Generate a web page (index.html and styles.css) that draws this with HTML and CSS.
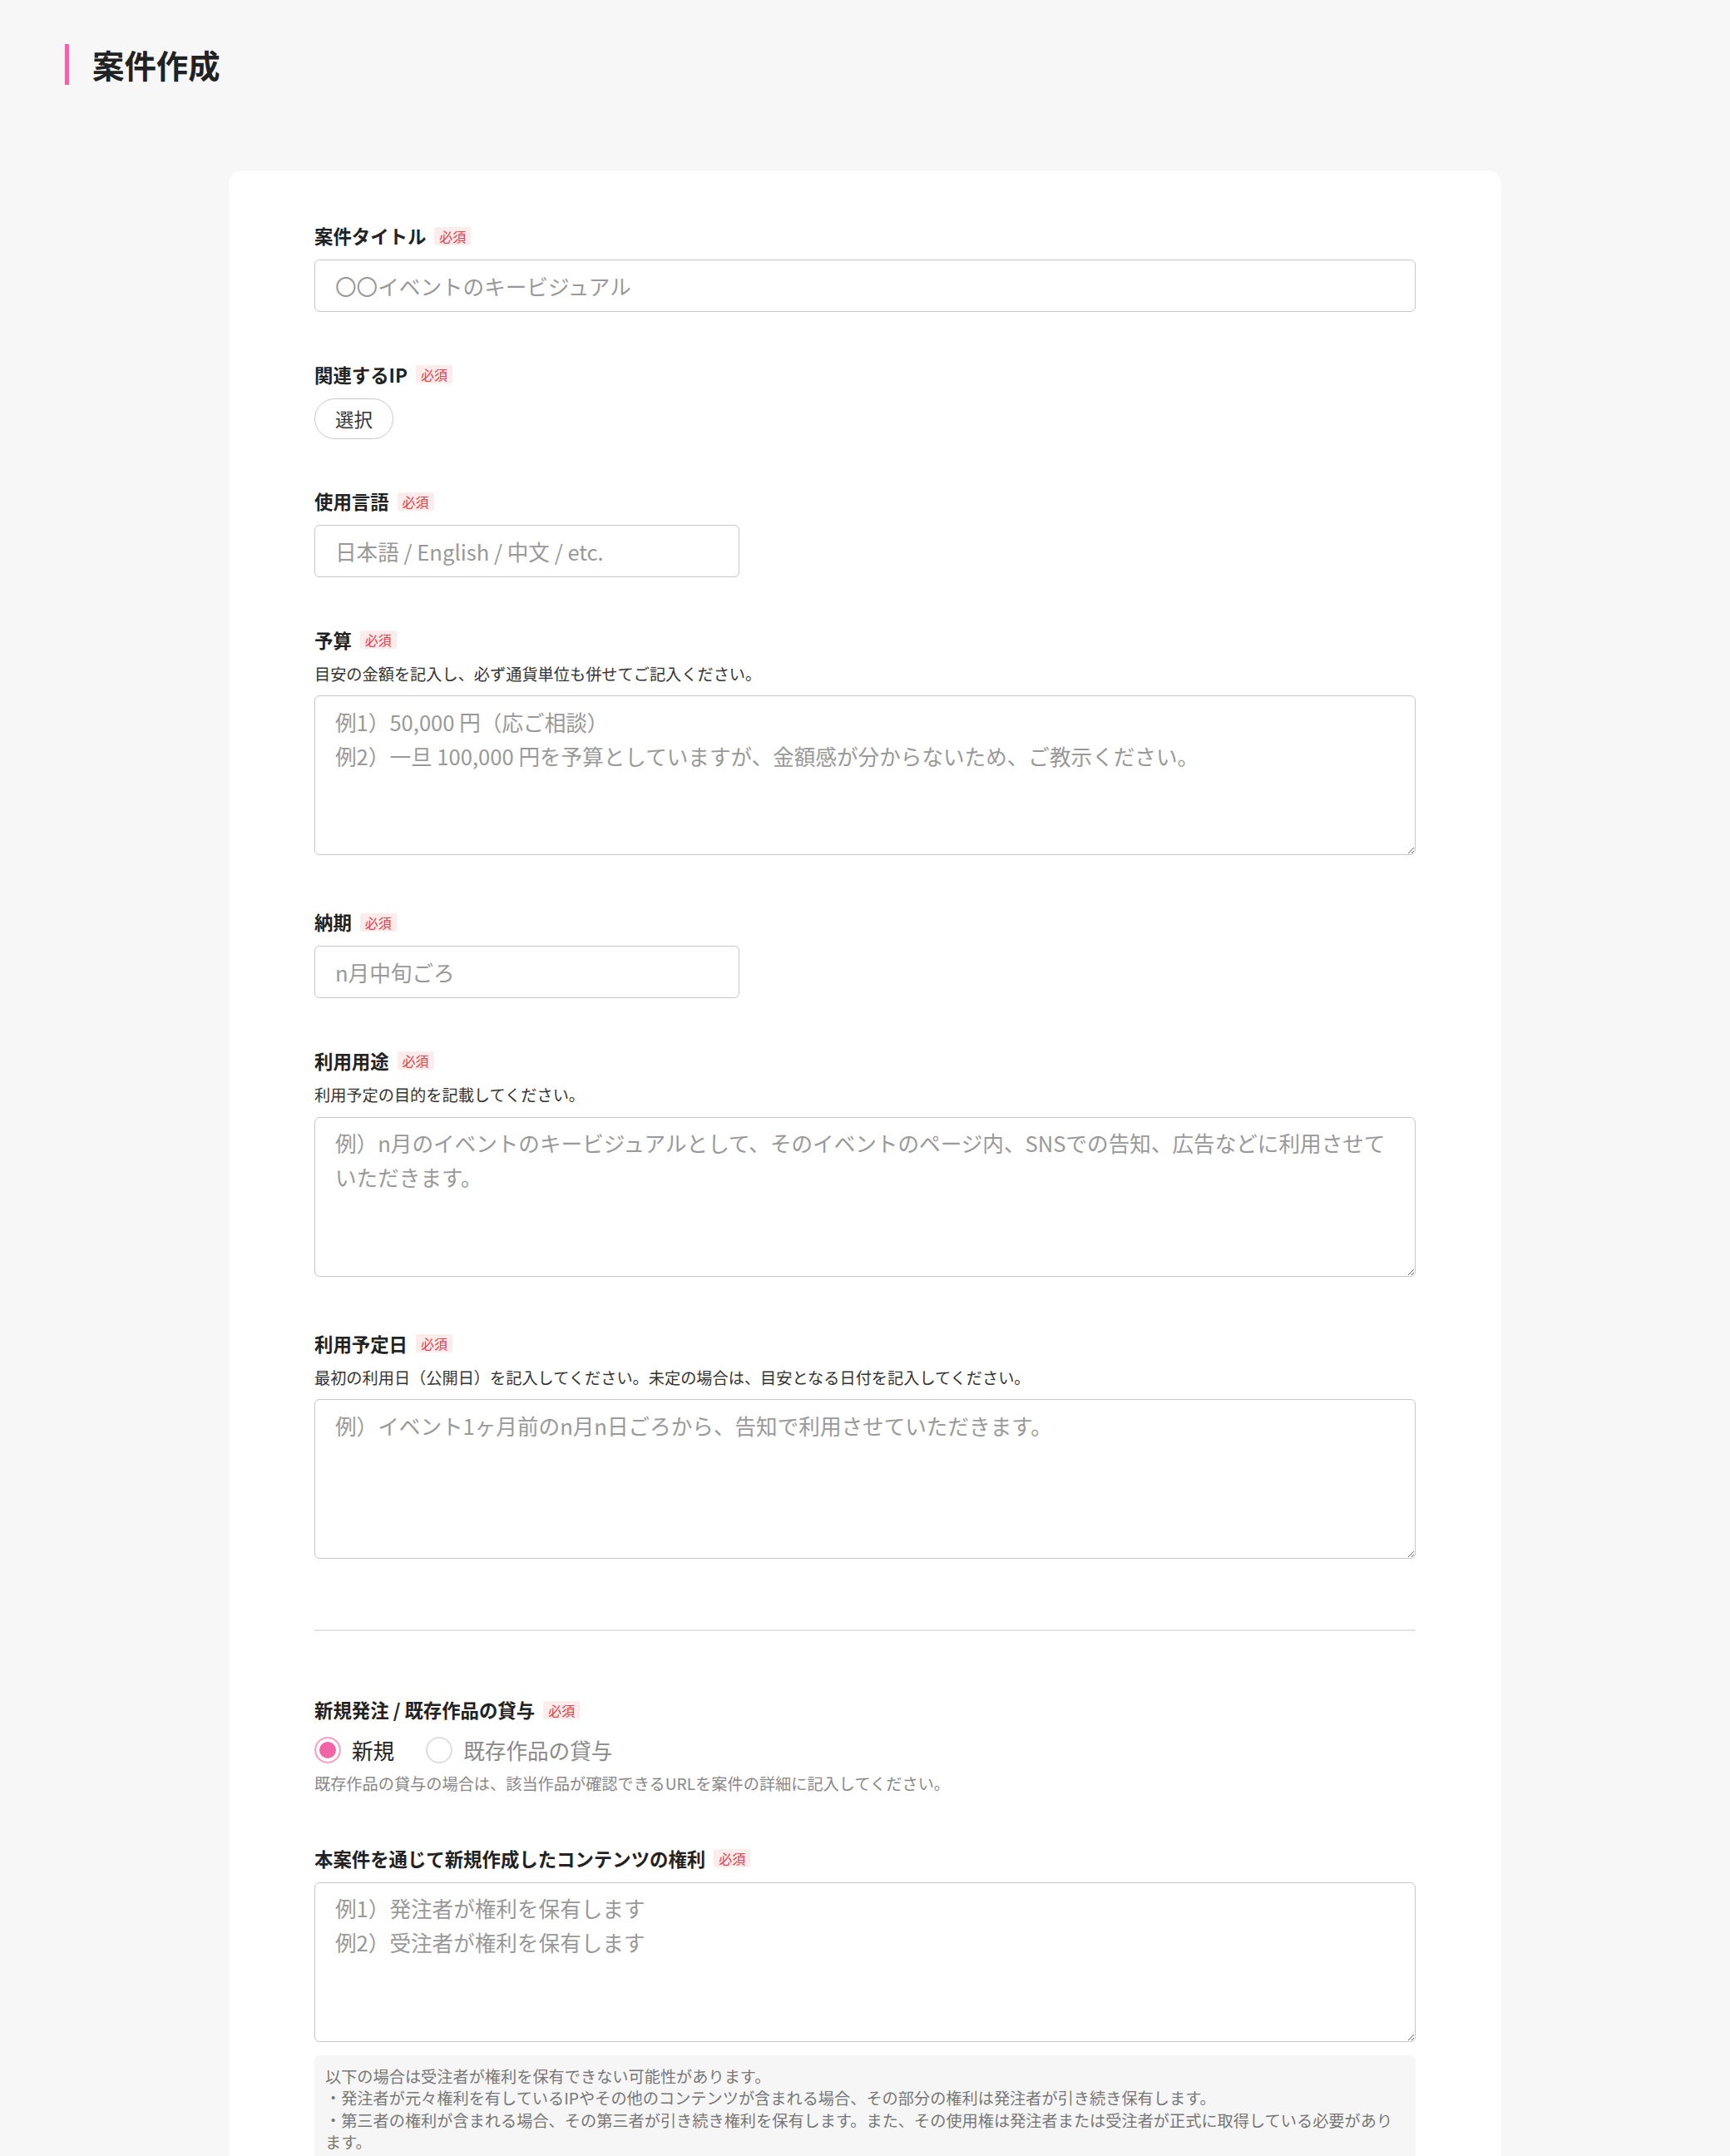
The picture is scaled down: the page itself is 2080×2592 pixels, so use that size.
FILE: index.html
```html
<!DOCTYPE html>
<html lang="ja">
<head>
<meta charset="utf-8">
<title>案件作成</title>
<link rel="stylesheet" href="styles.css">
</head>
<body>
<header class="page-header">
  <h1 class="page-title">案件作成</h1>
</header>
<main class="card">
  <form class="form">
    <div class="field">
      <label class="label">案件タイトル<span class="req">必須</span></label>
      <input class="input" type="text" placeholder="〇〇イベントのキービジュアル">
    </div>

    <div class="field">
      <label class="label">関連するIP<span class="req">必須</span></label>
      <button class="select-btn" type="button">選択</button>
    </div>

    <div class="field">
      <label class="label">使用言語<span class="req">必須</span></label>
      <input class="input short" type="text" placeholder="日本語 / English / 中文 / etc.">
    </div>

    <div class="field tall">
      <label class="label">予算<span class="req">必須</span></label>
      <p class="help">目安の金額を記入し、必ず通貨単位も併せてご記入ください。</p>
      <textarea class="textarea" placeholder="例1）50,000 円（応ご相談）&#10;例2）一旦 100,000 円を予算としていますが、金額感が分からないため、ご教示ください。"></textarea>
    </div>

    <div class="field">
      <label class="label">納期<span class="req">必須</span></label>
      <input class="input short" type="text" placeholder="n月中旬ごろ">
    </div>

    <div class="field tall">
      <label class="label">利用用途<span class="req">必須</span></label>
      <p class="help">利用予定の目的を記載してください。</p>
      <textarea class="textarea" placeholder="例）n月のイベントのキービジュアルとして、そのイベントのページ内、SNSでの告知、広告などに利用させていただきます。"></textarea>
    </div>

    <div class="field last">
      <label class="label">利用予定日<span class="req">必須</span></label>
      <p class="help">最初の利用日（公開日）を記入してください。未定の場合は、目安となる日付を記入してください。</p>
      <textarea class="textarea" placeholder="例）イベント1ヶ月前のn月n日ごろから、告知で利用させていただきます。"></textarea>
    </div>

    <hr class="divider">

    <div class="field">
      <label class="label">新規発注 / 既存作品の貸与<span class="req">必須</span></label>
      <div class="radios">
        <label class="radio"><input type="radio" name="kind" checked><span class="radio-text">新規</span></label>
        <label class="radio"><input type="radio" name="kind"><span class="radio-text muted">既存作品の貸与</span></label>
      </div>
      <p class="note">既存作品の貸与の場合は、該当作品が確認できるURLを案件の詳細に記入してください。</p>
    </div>

    <div class="field">
      <label class="label">本案件を通じて新規作成したコンテンツの権利<span class="req">必須</span></label>
      <textarea class="textarea" placeholder="例1）発注者が権利を保有します&#10;例2）受注者が権利を保有します"></textarea>
      <div class="info">
        <p>以下の場合は受注者が権利を保有できない可能性があります。</p>
        <p>・発注者が元々権利を有しているIPやその他のコンテンツが含まれる場合、その部分の権利は発注者が引き続き保有します。</p>
        <p>・第三者の権利が含まれる場合、その第三者が引き続き権利を保有します。また、その使用権は発注者または受注者が正式に取得している必要があります。</p>
      </div>
    </div>
  </form>
</main>
</body>
</html>
```

FILE: styles.css
```css
* {
  box-sizing: border-box;
}

html,
body {
  margin: 0;
  background: #f7f7f7;
}

body {
  font-family: "Noto Sans CJK JP", "Noto Sans", sans-serif;
  color: #222;
}

.page-header {
  padding: 53px 0 0 78px;
  height: 205px;
}

.page-title {
  margin: 0;
  border-left: 5px solid #f364a7;
  padding-left: 28px;
  font-size: 38.4px;
  font-weight: 700;
  line-height: 49px;
  color: #222;
}

.card {
  width: 1530px;
  margin: 0 auto;
  background: #fff;
  border-radius: 16px 16px 0 0;
  padding: 62px 103px 120px;
}

.form {
  display: flex;
  flex-direction: column;
}

.field {
  display: flex;
  flex-direction: column;
  align-items: flex-start;
  margin-bottom: 58.5px;
}

.field.tall {
  margin-bottom: 64px;
}

.field.last {
  margin-bottom: 0;
}

.label {
  display: flex;
  align-items: center;
  gap: 10px;
  font-size: 22.4px;
  font-weight: 700;
  line-height: 33px;
  margin-bottom: 12px;
  color: #222;
}

.req {
  font-size: 16px;
  font-weight: 400;
  line-height: 22px;
  padding: 0 6px;
  color: #e8404b;
  background: #fdecec;
  border-radius: 2px;
}

.input {
  display: block;
  width: 100%;
  height: 63px;
  border: 1px solid #c8c8c8;
  border-radius: 6px;
  padding: 0 24px;
  font-family: inherit;
  font-size: 25.6px;
  color: #222;
  background: #fff;
}

.input.short {
  width: 511px;
}

.input::placeholder,
.textarea::placeholder {
  color: #999999;
  opacity: 1;
}

.select-btn {
  height: 49px;
  padding: 0 24px;
  border: 1px solid #c8c8c8;
  border-radius: 25px;
  background: #fff;
  font-family: inherit;
  font-size: 22.4px;
  color: #333;
}

.help {
  margin: -2px 0 12px;
  font-size: 19.2px;
  line-height: 28.8px;
  color: #333;
}

.textarea {
  display: block;
  width: 100%;
  height: 192px;
  border: 1px solid #c8c8c8;
  border-radius: 6px;
  padding: 9.6px 24px;
  font-family: inherit;
  font-size: 25.6px;
  line-height: 41px;
  color: #222;
  background: #fff;
}

.divider {
  width: 100%;
  border: 0;
  border-top: 2px solid #e4e4e4;
  margin: 85px 0 78px;
}

.radios {
  display: flex;
  align-items: center;
  gap: 38px;
  height: 39px;
}

.radio {
  display: flex;
  align-items: center;
  gap: 13px;
  font-size: 25.6px;
  line-height: 39px;
}

.radio input {
  appearance: none;
  -webkit-appearance: none;
  margin: 0;
  width: 32px;
  height: 32px;
  border-radius: 50%;
  border: 2px solid #dddddd;
  background: #fff;
}

.radio input:checked {
  border-color: #f7a6cb;
  background: #f264a6;
  box-shadow: inset 0 0 0 4px #fff;
}

.radio-text {
  color: #222;
}

.radio-text.muted {
  color: #8a8a8a;
}

.note {
  margin: 7px 0 0;
  font-size: 19.2px;
  line-height: 28.8px;
  color: #888;
}

.info {
  width: 100%;
  margin-top: 16px;
  padding: 12px 10px 14px 13px;
  background: #f6f6f6;
  border-radius: 6px;
  font-size: 19.2px;
  line-height: 26.5px;
  color: #777;
}

.info p {
  margin: 0;
}
```
